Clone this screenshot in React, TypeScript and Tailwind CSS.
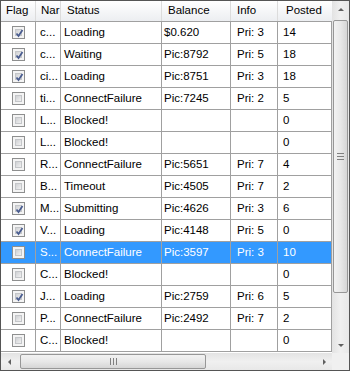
import React from "react";

type Row = { flag: boolean; name: string; status: string; balance: string; info: string; posted: string };

const rows: Row[] = [
  { flag: true, name: "c...", status: "Loading", balance: "$0.620", info: "Pri: 3", posted: "14" },
  { flag: true, name: "c...", status: "Waiting", balance: "Pic:8792", info: "Pri: 5", posted: "18" },
  { flag: true, name: "ci...", status: "Loading", balance: "Pic:8751", info: "Pri: 3", posted: "18" },
  { flag: false, name: "ti...", status: "ConnectFailure", balance: "Pic:7245", info: "Pri: 2", posted: "5" },
  { flag: false, name: "L...", status: "Blocked!", balance: "", info: "", posted: "0" },
  { flag: false, name: "L...", status: "Blocked!", balance: "", info: "", posted: "0" },
  { flag: false, name: "R...", status: "ConnectFailure", balance: "Pic:5651", info: "Pri: 7", posted: "4" },
  { flag: false, name: "B...", status: "Timeout", balance: "Pic:4505", info: "Pri: 7", posted: "2" },
  { flag: true, name: "M...", status: "Submitting", balance: "Pic:4626", info: "Pri: 3", posted: "6" },
  { flag: true, name: "V...", status: "Loading", balance: "Pic:4148", info: "Pri: 5", posted: "0" },
  { flag: false, name: "S...", status: "ConnectFailure", balance: "Pic:3597", info: "Pri: 3", posted: "10" },
  { flag: false, name: "C...", status: "Blocked!", balance: "", info: "", posted: "0" },
  { flag: true, name: "J...", status: "Loading", balance: "Pic:2759", info: "Pri: 6", posted: "5" },
  { flag: false, name: "P...", status: "ConnectFailure", balance: "Pic:2492", info: "Pri: 7", posted: "2" },
  { flag: false, name: "C...", status: "Blocked!", balance: "", info: "", posted: "0" },
];

const SELECTED = 10;

function CheckBox({ checked }: { checked: boolean }) {
  return (
    <div className="w-[13px] h-[13px] border border-[#8e8f8f] bg-[#f4f4f4] p-[2px] relative">
      <div className="w-full h-full bg-gradient-to-br from-[#cfd1d4] to-[#f1f1f1] border border-[#c4c6c9]" />
      {checked && (
        <svg className="absolute left-[1px] top-[1px]" width="11" height="11" viewBox="0 0 11 11">
          <path d="M2.5 5.5 L4.5 8 L8.5 2" stroke="#4a5d90" strokeWidth="1.8" fill="none" />
        </svg>
      )}
    </div>
  );
}

const cols = ["w-[35px]", "w-[25px]", "w-[101px]", "w-[69px]", "w-[47px]", "flex-1"];

function Arrow({ dir }: { dir: "up" | "down" | "left" | "right" }) {
  const pts =
    dir === "up" ? "1,5 4,2 7,5" : dir === "down" ? "1,3 4,6 7,3" : dir === "left" ? "5,1 2,4 5,7" : "3,1 6,4 3,7";
  return (
    <svg width="8" height="8" viewBox="0 0 8 8">
      <polygon points={pts} fill="#606060" />
    </svg>
  );
}

export default function App() {
  return (
    <div
      className="w-[350px] h-[371px] border border-[#555555] bg-white flex flex-col overflow-hidden text-[11.5px] text-black"
      style={{ fontFamily: '"Liberation Sans", Arial, sans-serif' }}
    >
      <div className="flex flex-1 min-h-0">
        <div className="flex-1 flex flex-col">
          <div className="h-[21px] flex bg-gradient-to-b from-white to-[#eceef1] border-b border-[#a0a0a0]">
            {["Flag", "Nar", "Status", "Balance", "Info", "Posted"].map((h, i) => (
              <div
                key={h}
                className={`${cols[i]} ${i < 5 ? "border-r border-[#dcdcdc]" : ""} flex items-center overflow-hidden whitespace-nowrap ${
                  i === 0 ? "pl-[5px]" : i === 1 ? "pl-[5px]" : i === 2 ? "pl-[6px]" : i === 3 ? "pl-[6px]" : i === 4 ? "pl-[6px]" : "pl-[8px]"
                }`}
              >
                {h}
              </div>
            ))}
          </div>
          {rows.map((r, idx) => {
            const sel = idx === SELECTED;
            const cellBase = "h-full flex items-center overflow-hidden whitespace-nowrap border-r border-[#a0a0a0]";
            return (
              <div
                key={idx}
                className={`h-[22px] flex border-b border-[#a0a0a0] ${sel ? "bg-[#3399ff] text-white" : "bg-white"}`}
              >
                <div className={`${cols[0]} ${cellBase} justify-center`}>
                  <CheckBox checked={r.flag} />
                </div>
                <div className={`${cols[1]} ${cellBase} pl-[4px]`}>{r.name}</div>
                <div className={`${cols[2]} ${cellBase} pl-[3px]`}>{r.status}</div>
                <div className={`${cols[3]} ${cellBase} pl-[2px]`}>{r.balance}</div>
                <div className={`${cols[4]} ${cellBase} pl-[6px]`}>{r.info}</div>
                <div className={`${cols[5]} ${cellBase} pl-[5px]`}>{r.posted}</div>
              </div>
            );
          })}
        </div>
        <div className="w-[17px] flex flex-col bg-gradient-to-r from-[#e3e3e3] via-[#f0f0f0] to-[#e8e8e8]">
          <div className="h-[17px] flex items-center justify-center">
            <Arrow dir="up" />
          </div>
          <div className="flex-1 px-[1px] pt-[2px] flex flex-col">
            <div className="h-[273px] rounded-[2px] border border-[#979797] bg-gradient-to-r from-[#f2f2f2] via-[#e8e8e8] to-[#d6d6d6] flex items-center justify-center">
              <div className="flex flex-col gap-[2px]">
                <div className="w-[7px] h-[1px] bg-[#808080]" />
                <div className="w-[7px] h-[1px] bg-[#808080]" />
                <div className="w-[7px] h-[1px] bg-[#808080]" />
              </div>
            </div>
          </div>
          <div className="h-[17px] flex items-center justify-center">
            <Arrow dir="down" />
          </div>
        </div>
      </div>
      <div className="h-[17px] flex">
        <div className="flex-1 flex bg-gradient-to-b from-[#e3e3e3] via-[#f0f0f0] to-[#e8e8e8]">
          <div className="w-[17px] flex items-center justify-center">
            <Arrow dir="left" />
          </div>
          <div className="flex-1 py-[1px] pl-[2px]">
            <div className="w-[186px] h-full rounded-[2px] border border-[#979797] bg-gradient-to-b from-[#f2f2f2] via-[#e8e8e8] to-[#d6d6d6] flex items-center justify-center">
              <div className="flex gap-[2px]">
                <div className="w-[1px] h-[7px] bg-[#808080]" />
                <div className="w-[1px] h-[7px] bg-[#808080]" />
                <div className="w-[1px] h-[7px] bg-[#808080]" />
              </div>
            </div>
          </div>
          <div className="w-[17px] flex items-center justify-center">
            <Arrow dir="right" />
          </div>
        </div>
        <div className="w-[17px] bg-[#f0f0f0]" />
      </div>
    </div>
  );
}
